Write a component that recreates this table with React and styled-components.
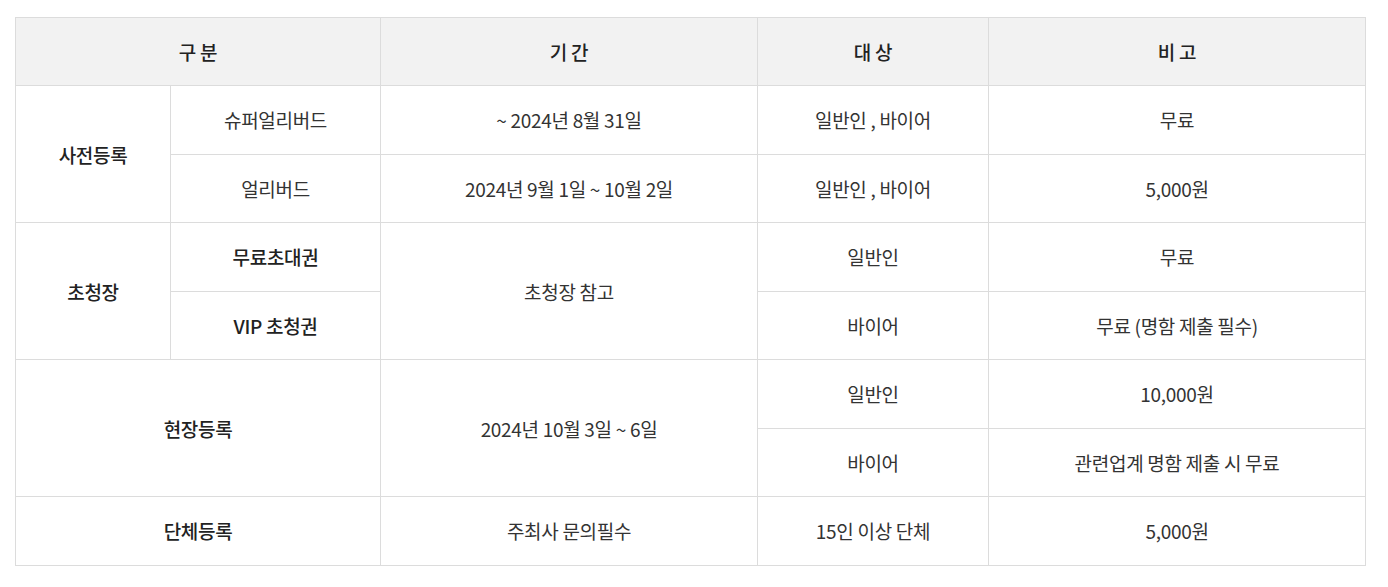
import React from 'react';
import styled, { createGlobalStyle } from 'styled-components';

const GlobalStyle = createGlobalStyle`
    body {
        margin: 0;
        background: #fff;
        font-family: "Noto Sans CJK KR", "Noto Sans", sans-serif;
    }
`;

const Wrapper = styled.div`
    padding: 17px 23px 0 15px;
`;

const Table = styled.table`
    width: 1350px;
    border-collapse: collapse;
    table-layout: fixed;
    border: 1px solid #dcdcdc;
    font-size: 19px;
    letter-spacing: -0.3px;
    color: #333;
`;

const Th = styled.th`
    height: 67px;
    padding: 0;
    background: #f2f2f2;
    border: 1px solid #dcdcdc;
    font-weight: 500;
    color: #222;
    text-align: center;
`;

const Td = styled.td`
    height: 67.5px;
    padding: 0;
    border: 1px solid #dcdcdc;
    text-align: center;
    vertical-align: middle;
    font-weight: ${props => (props.$strong ? 500 : 400)};
    color: ${props => (props.$strong ? '#222' : '#333')};
`;

const App = () => {
    return (
        <>
            <GlobalStyle />
            <Wrapper>
                <Table>
                    <colgroup>
                        <col style={{ width: 155 }} />
                        <col style={{ width: 210 }} />
                        <col style={{ width: 377 }} />
                        <col style={{ width: 231 }} />
                        <col style={{ width: 377 }} />
                    </colgroup>
                    <thead>
                        <tr>
                            <Th colSpan={2}>구 분</Th>
                            <Th>기 간</Th>
                            <Th>대 상</Th>
                            <Th>비 고</Th>
                        </tr>
                    </thead>
                    <tbody>
                        <tr>
                            <Td $strong rowSpan={2}>사전등록</Td>
                            <Td>슈퍼얼리버드</Td>
                            <Td>~ 2024년 8월 31일</Td>
                            <Td>일반인 , 바이어</Td>
                            <Td>무료</Td>
                        </tr>
                        <tr>
                            <Td>얼리버드</Td>
                            <Td>2024년 9월 1일 ~ 10월 2일</Td>
                            <Td>일반인 , 바이어</Td>
                            <Td>5,000원</Td>
                        </tr>
                        <tr>
                            <Td $strong rowSpan={2}>초청장</Td>
                            <Td $strong>무료초대권</Td>
                            <Td rowSpan={2}>초청장 참고</Td>
                            <Td>일반인</Td>
                            <Td>무료</Td>
                        </tr>
                        <tr>
                            <Td $strong>VIP 초청권</Td>
                            <Td>바이어</Td>
                            <Td>무료 (명함 제출 필수)</Td>
                        </tr>
                        <tr>
                            <Td $strong colSpan={2} rowSpan={2}>현장등록</Td>
                            <Td rowSpan={2}>2024년 10월 3일 ~ 6일</Td>
                            <Td>일반인</Td>
                            <Td>10,000원</Td>
                        </tr>
                        <tr>
                            <Td>바이어</Td>
                            <Td>관련업계 명함 제출 시 무료</Td>
                        </tr>
                        <tr>
                            <Td $strong colSpan={2}>단체등록</Td>
                            <Td>주최사 문의필수</Td>
                            <Td>15인 이상 단체</Td>
                            <Td>5,000원</Td>
                        </tr>
                    </tbody>
                </Table>
            </Wrapper>
        </>
    );
};

export default App;
